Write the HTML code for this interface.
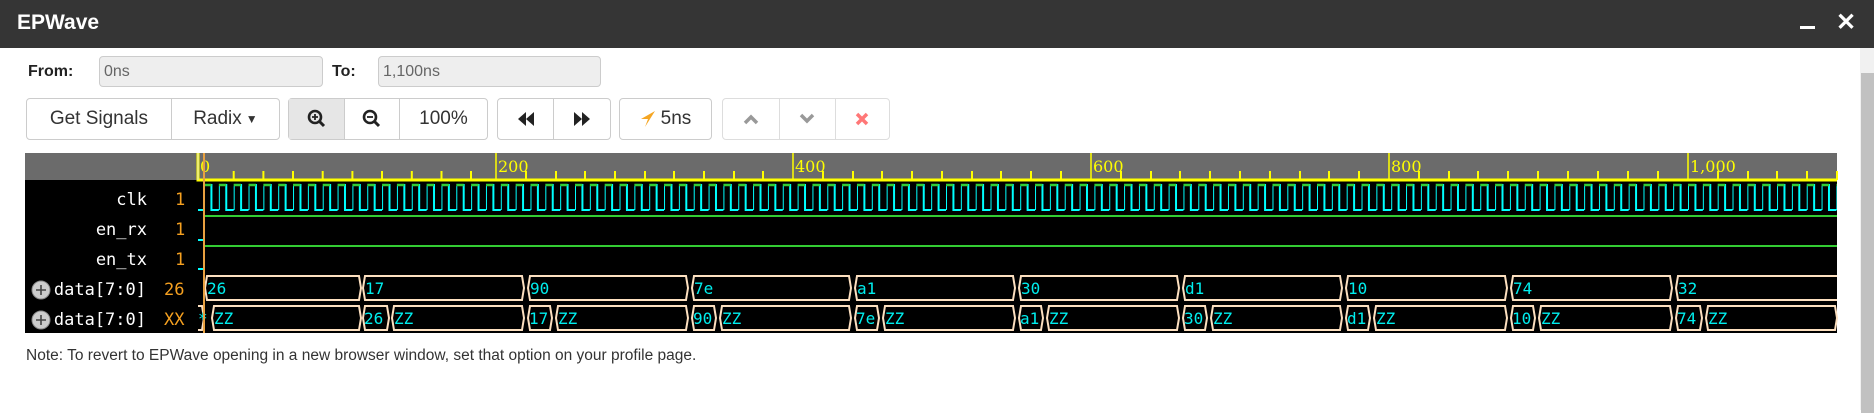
<!DOCTYPE html>
<html><head><meta charset="utf-8"><style>
*{margin:0;padding:0;box-sizing:border-box}
body{width:1874px;height:410px;background:#fff;font-family:"Liberation Sans",Arial,sans-serif;position:relative;overflow:hidden;color:#333}
.title{position:absolute;left:0;top:0;width:1874px;height:48px;background:#353535;color:#fff}
.title b{position:absolute;left:17px;top:11px;font-size:21px}
.lbl{position:absolute;font-weight:bold;font-size:16px;color:#222}
.inp{position:absolute;height:31px;background:#eee;border:1px solid #ccc;border-radius:4px;font-size:16px;color:#666;padding:6px 4px}
.grp{position:absolute;top:98px;height:42px;border:1px solid #ccc;border-radius:4px;display:flex;background:#fff}
.grp div{height:100%;display:flex;align-items:center;justify-content:center;border-left:1px solid #ccc;font-size:19px;color:#333}
.grp div:first-child{border-left:none}
.note{position:absolute;left:26px;top:347px;font-size:15.5px;color:#333}
.sb{position:absolute;left:1860px;top:48px;width:14px;height:362px;background:#f1f1f1}
.sb i{position:absolute;left:1px;top:25px;width:13px;height:340px;background:#c1c1c1}
</style></head><body>
<div class="title"><b>EPWave</b>
<div style="position:absolute;left:1800px;top:26px;width:15px;height:3px;background:#fff"></div>
<div style="position:absolute;left:1836px;top:8px;color:#fff;font-size:24px;font-weight:bold">✕</div>
</div>
<div class="lbl" style="left:28px;top:63px">From:</div>
<div class="inp" style="left:99px;top:56px;width:224px">0ns</div>
<div class="lbl" style="left:332px;top:63px">To:</div>
<div class="inp" style="left:378px;top:56px;width:223px">1,100ns</div>

<div class="grp" style="left:26px;width:254px"><div style="width:145px">Get Signals</div><div style="width:109px">Radix<span style="font-size:12px;margin-left:4px">▼</span></div></div>
<div class="grp" style="left:288px;width:200px"><div style="width:56px;background:#e6e6e6">
<svg width="20" height="20" viewBox="0 0 20 20"><circle cx="8" cy="8" r="6" fill="none" stroke="#222" stroke-width="2.6"/><path d="M12 12l5 5" stroke="#222" stroke-width="3"/><path d="M5 8h6M8 5v6" stroke="#222" stroke-width="1.8"/></svg></div>
<div style="width:55px"><svg width="20" height="20" viewBox="0 0 20 20"><circle cx="8" cy="8" r="6" fill="none" stroke="#222" stroke-width="2.6"/><path d="M12 12l5 5" stroke="#222" stroke-width="3"/><path d="M5 8h6" stroke="#222" stroke-width="1.8"/></svg></div>
<div style="width:89px">100%</div></div>
<div class="grp" style="left:497px;width:114px"><div style="width:56px"><svg width="18" height="16" viewBox="0 0 18 16"><path d="M9 1L1 8l8 7zM17 1l-8 7 8 7z" fill="#222"/></svg></div><div style="width:58px"><svg width="18" height="16" viewBox="0 0 18 16"><path d="M1 1l8 7-8 7zM9 1l8 7-8 7z" fill="#222"/></svg></div></div>
<div class="grp" style="left:619px;width:93px"><div style="width:93px"><svg width="16" height="18" viewBox="0 0 16 18" style="margin-right:5px"><path d="M15 1L1 9h7l-3 8z" fill="#f5a623"/></svg>5ns</div></div>
<div class="grp" style="left:722px;width:168px;border-color:#ddd"><div style="width:57px;border-color:#ddd"><svg width="16" height="12" viewBox="0 0 16 12"><path d="M2 10l6-6 6 6" fill="none" stroke="#999" stroke-width="3.5"/></svg></div><div style="width:56px;border-color:#ddd"><svg width="16" height="12" viewBox="0 0 16 12"><path d="M2 2l6 6 6-6" fill="none" stroke="#999" stroke-width="3.5"/></svg></div><div style="width:55px;border-color:#ddd"><svg width="14" height="14" viewBox="0 0 14 14"><path d="M2 2l10 10M12 2L2 12" stroke="#f77" stroke-width="3.5"/></svg></div></div>

<svg style="position:absolute;left:0;top:0" width="1874" height="410" font-family="DejaVu Sans Mono,Liberation Mono,monospace">
<defs>
<pattern id="clk" x="204" y="183" width="14.84" height="30" patternUnits="userSpaceOnUse">
<path d="M0,27 V2 H7.42 V27 H14.84" fill="none" stroke="#0ff" stroke-width="2"/>
<path d="M0,2 H7.42" stroke="#3c3" stroke-width="2.5"/>
</pattern>
</defs>
<rect x="25" y="153" width="1812" height="27" fill="#6b6b6b"/>
<rect x="25" y="180" width="1812" height="153" fill="#000"/>
<path d="M198 153V180H1837" fill="none" stroke="#ff0" stroke-width="3"/>
<path d="M198 153V180" stroke="#ddd" stroke-width="1"/>
<g stroke="#ff0" stroke-width="2">
<path d="M233.7 171v9M263.4 171v9M293 171v9M322.7 171v9M352.4 171v9M382 171v9M411.8 171v9M441.5 171v9M471 171v9"/>
<path d="M526 171v9M556 171v9M585 171v9M615 171v9M645 171v9M674 171v9M704 171v9M734 171v9M763 171v9"/>
<path d="M823 171v9M853 171v9M882 171v9M912 171v9M942 171v9M972 171v9M1001 171v9M1031 171v9M1061 171v9"/>
<path d="M1121 171v9M1151 171v9M1180 171v9M1210 171v9M1240 171v9M1270 171v9M1300 171v9M1329 171v9M1359 171v9"/>
<path d="M1419 171v9M1449 171v9M1478 171v9M1508 171v9M1538 171v9M1568 171v9M1598 171v9M1628 171v9M1658 171v9"/>
<path d="M1718 171v9M1748 171v9M1777 171v9M1807 171v9M1837 171v9"/>
<path d="M496 153v27M793 153v27M1091 153v27M1389 153v27M1688 153v27" stroke-width="1.5"/>
</g>
<g fill="#ff0" font-family="DejaVu Serif,Liberation Serif,serif" font-size="16">
<text x="200" y="172">0</text><text x="498" y="172">200</text><text x="795" y="172">400</text><text x="1093" y="172">600</text><text x="1391" y="172">800</text><text x="1690" y="172">1,000</text>
</g>
<rect x="204" y="183" width="1633" height="30" fill="url(#clk)"/>
<path d="M204 216H1837M204 246H1837" stroke="#3c3" stroke-width="2"/>
<path d="M198 210h5M198 240h5M198 269h5" stroke="#0ff" stroke-width="2"/>
<g fill="#fff" font-size="17" text-anchor="end">
<text x="147" y="205">clk</text><text x="147" y="235">en_rx</text><text x="147" y="265">en_tx</text><text x="146" y="295">data[7:0]</text><text x="146" y="325">data[7:0]</text>
</g>
<g fill="#f5a020" font-size="17">
<text x="175" y="205">1</text><text x="175" y="235">1</text><text x="175" y="265">1</text><text x="164" y="295">26</text><text x="164" y="325">XX</text>
</g>
<g fill="#ccc" stroke="#888"><circle cx="41" cy="290" r="9"/><circle cx="41" cy="320" r="9"/></g>
<path d="M36 290h10M41 285v10M36 320h10M41 315v10" stroke="#444" stroke-width="1.6"/>
<g fill="none" stroke="#fde0c0" stroke-width="2">
<path d="M205 288l2-12H359l2 12-2 12H207zM363 288l2-12H522l2 12-2 12H365zM528 288l2-12H686l2 12-2 12H530zM692 288l2-12H849l2 12-2 12H694zM855 288l2-12H1013l2 12-2 12H857zM1019 288l2-12H1177l2 12-2 12H1021zM1183 288l2-12H1340l2 12-2 12H1185zM1346 288l2-12H1505l2 12-2 12H1348zM1511 288l2-12H1670l2 12-2 12H1513zM1837 276H1678l-2 12 2 12H1837"/>
<path d="M198 306h4l2 12-2 12h-4M212 318l2-12H359l2 12-2 12H214zM363 318l2-12H387l2 12-2 12H365zM392 318l2-12H522l2 12-2 12H394zM528 318l2-12H550l2 12-2 12H530zM556 318l2-12H686l2 12-2 12H558zM692 318l2-12H714l2 12-2 12H694zM720 318l2-12H849l2 12-2 12H722zM855 318l2-12H877l2 12-2 12H857zM883 318l2-12H1013l2 12-2 12H885zM1019 318l2-12H1041l2 12-2 12H1021zM1047 318l2-12H1177l2 12-2 12H1049zM1183 318l2-12H1205l2 12-2 12H1185zM1211 318l2-12H1340l2 12-2 12H1213zM1346 318l2-12H1368l2 12-2 12H1348zM1374 318l2-12H1505l2 12-2 12H1376zM1511 318l2-12H1533l2 12-2 12H1513zM1539 318l2-12H1670l2 12-2 12H1541zM1676 318l2-12H1700l2 12-2 12H1678zM1706 318l2-12H1835l2 12-2 12H1708z"/>
</g>
<g fill="#0ee" font-size="16">
<text x="207" y="294">26</text><text x="365" y="294">17</text><text x="530" y="294">90</text><text x="694" y="294">7e</text><text x="857" y="294">a1</text><text x="1021" y="294">30</text><text x="1185" y="294">d1</text><text x="1348" y="294">10</text><text x="1513" y="294">74</text><text x="1678" y="294">32</text>
<text x="198" y="324">*</text><text x="214" y="324">ZZ</text>
<text x="364" y="324">26</text><text x="394" y="324">ZZ</text><text x="529" y="324">17</text><text x="558" y="324">ZZ</text><text x="693" y="324">90</text><text x="722" y="324">ZZ</text><text x="856" y="324">7e</text><text x="885" y="324">ZZ</text><text x="1020" y="324">a1</text><text x="1049" y="324">ZZ</text><text x="1184" y="324">30</text><text x="1213" y="324">ZZ</text><text x="1347" y="324">d1</text><text x="1376" y="324">ZZ</text><text x="1512" y="324">10</text><text x="1541" y="324">ZZ</text><text x="1677" y="324">74</text><text x="1708" y="324">ZZ</text>
</g>
<path d="M204 153V333" stroke="#e8a040" stroke-width="2"/>
</svg>
<div class="note">Note: To revert to EPWave opening in a new browser window, set that option on your profile page.</div>
<div class="sb"><i></i></div>
</body></html>
